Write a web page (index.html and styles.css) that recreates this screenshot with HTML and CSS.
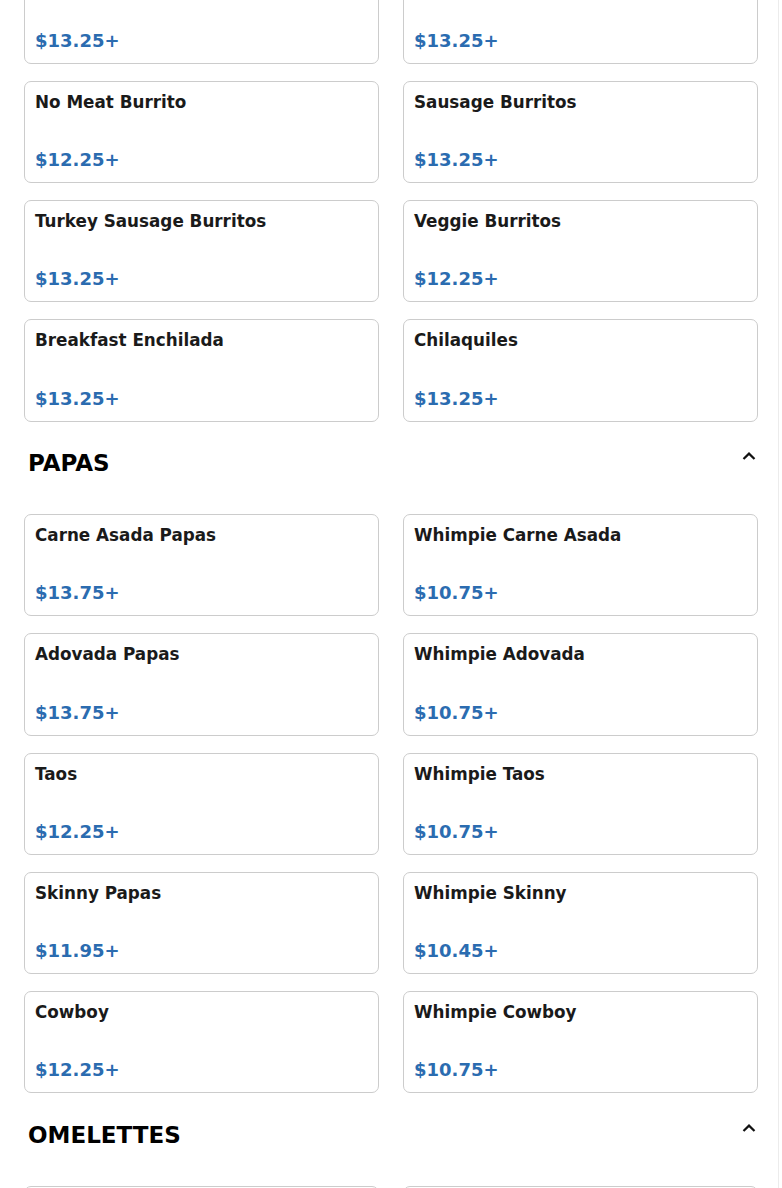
FILE: index.html
```html
<!DOCTYPE html>
<html lang="en">
<head>
<meta charset="utf-8">
<title>Menu</title>
<link rel="stylesheet" href="styles.css">
</head>
<body>
<div class="page">
  <div class="content">
    <div class="grid">
      <div class="card"><div class="name">Chorizo Burritos</div><div class="price">$13.25+</div></div>
      <div class="card"><div class="name">Ham Burritos</div><div class="price">$13.25+</div></div>
      <div class="card"><div class="name">No Meat Burrito</div><div class="price">$12.25+</div></div>
      <div class="card"><div class="name">Sausage Burritos</div><div class="price">$13.25+</div></div>
      <div class="card"><div class="name">Turkey Sausage Burritos</div><div class="price">$13.25+</div></div>
      <div class="card"><div class="name">Veggie Burritos</div><div class="price">$12.25+</div></div>
      <div class="card"><div class="name">Breakfast Enchilada</div><div class="price">$13.25+</div></div>
      <div class="card"><div class="name">Chilaquiles</div><div class="price">$13.25+</div></div>
    </div>

    <div class="section-head">
      <h2 class="section-title">PAPAS</h2>
      <svg class="chev" width="14" height="8" viewBox="0 0 14 8"><path d="M1.5 7 L7 1.6 L12.5 7" fill="none" stroke="#111" stroke-width="2.2"/></svg>
    </div>
    <div class="grid">
      <div class="card"><div class="name">Carne Asada Papas</div><div class="price">$13.75+</div></div>
      <div class="card"><div class="name">Whimpie Carne Asada</div><div class="price">$10.75+</div></div>
      <div class="card"><div class="name">Adovada Papas</div><div class="price">$13.75+</div></div>
      <div class="card"><div class="name">Whimpie Adovada</div><div class="price">$10.75+</div></div>
      <div class="card"><div class="name">Taos</div><div class="price">$12.25+</div></div>
      <div class="card"><div class="name">Whimpie Taos</div><div class="price">$10.75+</div></div>
      <div class="card"><div class="name">Skinny Papas</div><div class="price">$11.95+</div></div>
      <div class="card"><div class="name">Whimpie Skinny</div><div class="price">$10.45+</div></div>
      <div class="card"><div class="name">Cowboy</div><div class="price">$12.25+</div></div>
      <div class="card"><div class="name">Whimpie Cowboy</div><div class="price">$10.75+</div></div>
    </div>

    <div class="section-head">
      <h2 class="section-title">OMELETTES</h2>
      <svg class="chev" width="14" height="8" viewBox="0 0 14 8"><path d="M1.5 7 L7 1.6 L12.5 7" fill="none" stroke="#111" stroke-width="2.2"/></svg>
    </div>
    <div class="grid">
      <div class="card"><div class="name">Denver Omelette</div><div class="price">$13.25+</div></div>
      <div class="card"><div class="name">Veggie Omelette</div><div class="price">$12.75+</div></div>
    </div>
  </div>
</div>
</body>
</html>
```

FILE: styles.css
```css
html, body {
  margin: 0;
  padding: 0;
  background: #ffffff;
  overflow: hidden;
}

body {
  font-family: "DejaVu Sans", Verdana, sans-serif;
  color: #1a202c;
}

.page {
  width: 778px;
  height: 1188px;
  border-right: 1px solid #ececec;
  overflow: hidden;
}

.content {
  margin-top: -38.5px;
  padding: 0 20px 0 24px;
}

.grid {
  display: grid;
  grid-template-columns: 1fr 1fr;
  column-gap: 24px;
  row-gap: 17px;
}

.card {
  box-sizing: border-box;
  height: 102.25px;
  border: 1px solid #cccccc;
  border-radius: 7px;
  padding: 11px 10px 12px;
  display: flex;
  flex-direction: column;
  justify-content: space-between;
  background: #fff;
}

.name {
  font-weight: bold;
  font-size: 16.8px;
  line-height: 19px;
  color: #1a1a1a;
}

.price {
  font-weight: bold;
  font-size: 18px;
  line-height: 21px;
  color: #2b6cb0;
}

.section-head {
  display: flex;
  justify-content: space-between;
  align-items: flex-start;
  margin: 28.5px 0 37px;
  padding: 0 2px 0 4px;
}

.section-title {
  margin: 0;
  font-size: 23px;
  line-height: 27px;
  font-weight: bold;
  color: #000;
}

.chev {
  display: block;
  margin-top: 2px;
}
```
